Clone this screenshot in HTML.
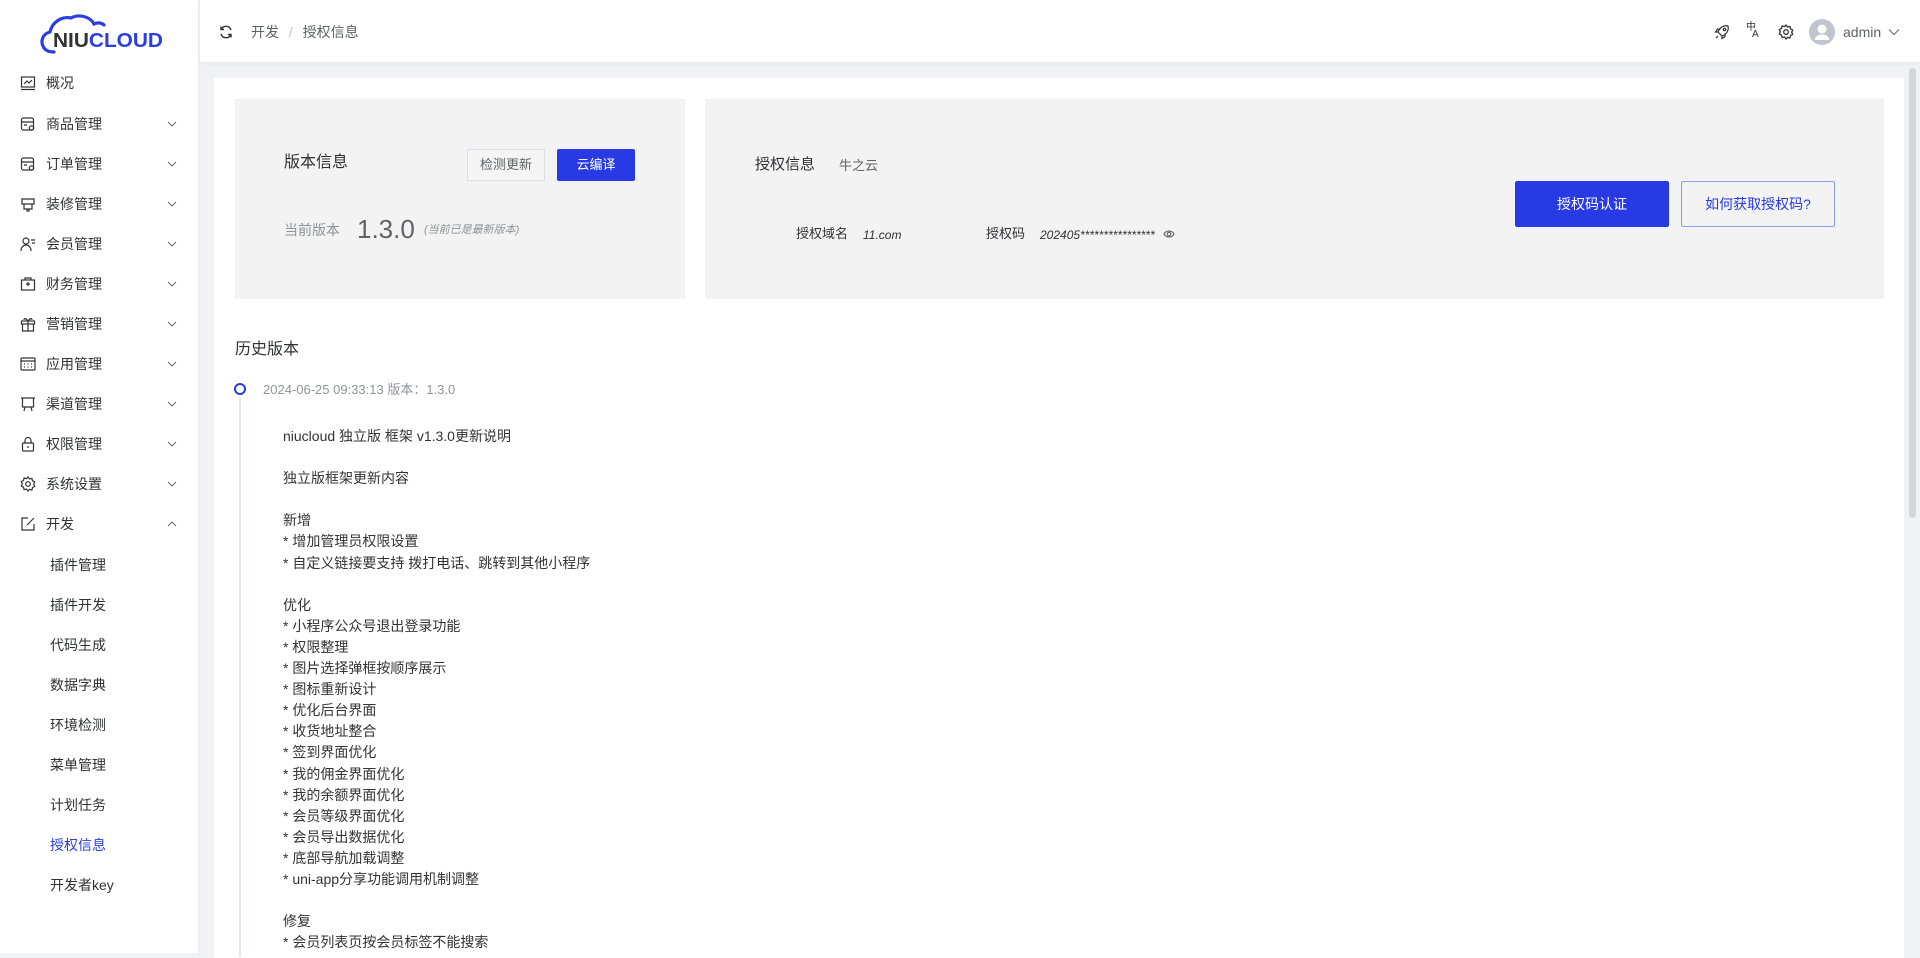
<!DOCTYPE html>
<html><head><meta charset="utf-8"><style>
*{margin:0;padding:0;box-sizing:border-box}
body{width:1920px;height:953px;overflow:hidden;background:#f0f2f5;font-family:"Liberation Sans","Noto Sans CJK SC",sans-serif;color:#303133;position:relative}
.abs{position:absolute}
#side{left:0;top:0;width:199px;height:953px;background:#fff;border-right:1px solid #e8ebf0}
.mi{position:absolute;left:0;width:199px;height:40px;line-height:40px;font-size:14px;color:#303133}
.mi .ic{position:absolute;left:20px;top:12px;width:16px;height:16px}
.mi .t{position:absolute;left:46px}
.mi .ch{position:absolute;left:167px;top:16px;width:10px;height:8px}
.sub{position:absolute;left:50px;height:40px;line-height:40px;font-size:14px;color:#303133}
#hdr{left:200px;top:0;width:1720px;height:62px;background:#fff;box-shadow:0 1px 4px rgba(0,21,41,.06)}
#card{left:214px;top:78px;width:1690px;height:880px;background:#fff}
.box{background:#f3f3f3}
.lines{left:283px;top:426px;font-size:14px;line-height:21.1px;color:#333}
</style></head><body>
<div id="side" class="abs">
<svg class="abs" style="left:38px;top:12px" width="130" height="42" viewBox="0 0 130 42">
<path d="M6 36 C2 30 4 22 12 20 C14 10 24 4 33 6 C40 2 52 4 56 12 C60 10 64 11 66 13" fill="none" stroke="#2a3ee3" stroke-width="3.2" stroke-linecap="round"/>
<path d="M6 36 C8 39 12 40 16 40" fill="none" stroke="#2a3ee3" stroke-width="3.2" stroke-linecap="round"/>
<text x="15" y="35" font-family="Liberation Sans" font-weight="700" font-size="20" textLength="110" lengthAdjust="spacingAndGlyphs"><tspan fill="#333">NIU</tspan><tspan fill="#2a3ee3">CLOUD</tspan></text>
</svg>
<div class="mi" style="top:63px"><svg class="ic" viewBox="0 0 16 16" fill="none" stroke="#333" stroke-width="1.2"><rect x="1.5" y="2" width="13" height="10"/><path d="M1 14.5h14M4 9l3-3 2 2 3-3"/></svg><span class="t">概况</span></div>
<div class="mi" style="top:104px"><svg class="ic" viewBox="0 0 16 16" fill="none" stroke="#333" stroke-width="1.2"><rect x="1.5" y="2" width="12" height="12" rx="2"/><path d="M1.5 6h12M4 9h3"/><circle cx="11.5" cy="12" r="2.2"/></svg><span class="t">商品管理</span><svg class="ch" viewBox="0 0 10 8" fill="none" stroke="#666" stroke-width="1"><path d="M1 2l4 4 4-4"/></svg></div>
<div class="mi" style="top:144px"><svg class="ic" viewBox="0 0 16 16" fill="none" stroke="#333" stroke-width="1.2"><rect x="1.5" y="2" width="12" height="12" rx="2"/><path d="M1.5 6h12M4 9h3"/><circle cx="11.5" cy="12" r="2.2"/></svg><span class="t">订单管理</span><svg class="ch" viewBox="0 0 10 8" fill="none" stroke="#666" stroke-width="1"><path d="M1 2l4 4 4-4"/></svg></div>
<div class="mi" style="top:184px"><svg class="ic" viewBox="0 0 16 16" fill="none" stroke="#333" stroke-width="1.2"><path d="M2 3h12v5H2zM4 8v5h8V8M7 13v2h2v-2"/></svg><span class="t">装修管理</span><svg class="ch" viewBox="0 0 10 8" fill="none" stroke="#666" stroke-width="1"><path d="M1 2l4 4 4-4"/></svg></div>
<div class="mi" style="top:224px"><svg class="ic" viewBox="0 0 16 16" fill="none" stroke="#333" stroke-width="1.2"><circle cx="6" cy="5" r="3"/><path d="M1 15c0-4 2.5-6 5-6s5 2 5 6M11 4h4M12 7h3"/></svg><span class="t">会员管理</span><svg class="ch" viewBox="0 0 10 8" fill="none" stroke="#666" stroke-width="1"><path d="M1 2l4 4 4-4"/></svg></div>
<div class="mi" style="top:264px"><svg class="ic" viewBox="0 0 16 16" fill="none" stroke="#333" stroke-width="1.2"><rect x="1.5" y="4" width="13" height="10"/><path d="M5 4V2h6v2M8 6v4M6 8h4"/></svg><span class="t">财务管理</span><svg class="ch" viewBox="0 0 10 8" fill="none" stroke="#666" stroke-width="1"><path d="M1 2l4 4 4-4"/></svg></div>
<div class="mi" style="top:304px"><svg class="ic" viewBox="0 0 16 16" fill="none" stroke="#333" stroke-width="1.2"><rect x="1.5" y="5" width="13" height="3"/><path d="M2.5 8v7h11V8M8 5v10M8 5C6 2 4 2 4 4M8 5c2-3 4-3 4-1"/></svg><span class="t">营销管理</span><svg class="ch" viewBox="0 0 10 8" fill="none" stroke="#666" stroke-width="1"><path d="M1 2l4 4 4-4"/></svg></div>
<div class="mi" style="top:344px"><svg class="ic" viewBox="0 0 16 16" fill="none" stroke="#333" stroke-width="1.2"><rect x="1" y="2" width="14" height="12" rx="1"/><path d="M1 5h14M4 8h1M7.5 8h1M11 8h1M4 11h1M7.5 11h1M11 11h1"/></svg><span class="t">应用管理</span><svg class="ch" viewBox="0 0 10 8" fill="none" stroke="#666" stroke-width="1"><path d="M1 2l4 4 4-4"/></svg></div>
<div class="mi" style="top:384px"><svg class="ic" viewBox="0 0 16 16" fill="none" stroke="#333" stroke-width="1.2"><path d="M1 2h14M2.5 2v9h11V2M5 11l-1 4M11 11l1 4"/></svg><span class="t">渠道管理</span><svg class="ch" viewBox="0 0 10 8" fill="none" stroke="#666" stroke-width="1"><path d="M1 2l4 4 4-4"/></svg></div>
<div class="mi" style="top:424px"><svg class="ic" viewBox="0 0 16 16" fill="none" stroke="#333" stroke-width="1.2"><rect x="2.5" y="7" width="11" height="8" rx="1"/><path d="M5 7V4.5a3 3 0 016 0V7M8 10v2"/></svg><span class="t">权限管理</span><svg class="ch" viewBox="0 0 10 8" fill="none" stroke="#666" stroke-width="1"><path d="M1 2l4 4 4-4"/></svg></div>
<div class="mi" style="top:464px"><svg class="ic" viewBox="0 0 16 16" fill="none" stroke="#333" stroke-width="1.2"><circle cx="8" cy="8" r="2.3"/><path d="M8 1l1.5 2 2.4-.6.6 2.4 2.2 1.2-1 2.2 1 2.2-2.2 1.2-.6 2.4-2.4-.6L8 15l-1.5-2-2.4.6-.6-2.4L1.3 10l1-2.2-1-2.2 2.2-1.2.6-2.4 2.4.6z"/></svg><span class="t">系统设置</span><svg class="ch" viewBox="0 0 10 8" fill="none" stroke="#666" stroke-width="1"><path d="M1 2l4 4 4-4"/></svg></div>
<div class="mi" style="top:504px"><svg class="ic" viewBox="0 0 16 16" fill="none" stroke="#333" stroke-width="1.2"><path d="M8 2H2v12h12V8M7 9l7-7"/></svg><span class="t">开发</span><svg class="ch" viewBox="0 0 10 8" fill="none" stroke="#666" stroke-width="1"><path d="M1 6l4-4 4 4"/></svg></div>
<div class="sub" style="top:545px">插件管理</div>
<div class="sub" style="top:585px">插件开发</div>
<div class="sub" style="top:625px">代码生成</div>
<div class="sub" style="top:665px">数据字典</div>
<div class="sub" style="top:705px">环境检测</div>
<div class="sub" style="top:745px">菜单管理</div>
<div class="sub" style="top:785px">计划任务</div>
<div class="sub" style="top:825px;color:#2a3ee3">授权信息</div>
<div class="sub" style="top:865px">开发者key</div>
</div>

<div id="hdr" class="abs">
<svg class="abs" style="left:19px;top:25px" width="14" height="14" viewBox="0 0 14 14" fill="none" stroke="#333" stroke-width="1.4"><path d="M12 5A5.2 5.2 0 002.2 4.5M2 1.5v3h3M2 9a5.2 5.2 0 009.8.5M12 12.5v-3H9"/></svg>
<div class="abs" style="left:51px;top:22px;font-size:14px;line-height:20px;color:#606266">开发 <span style="color:#c0c4cc;margin:0 6px">/</span> 授权信息</div>
<svg class="abs" style="left:1514px;top:24px" width="16" height="16" viewBox="0 0 16 16" fill="none" stroke="#333" stroke-width="1.2"><path d="M6 10l-2-2c2-5 6-7 10-6 1 4-1 8-6 10zM4 8H1.5l2-3h3M8 12v2.5l3-2v-3"/><circle cx="10.5" cy="5.5" r="1.2"/><path d="M4 12l-2 2"/></svg>
<div class="abs" style="left:1546px;top:23px;font-size:10px;line-height:10px;color:#333">中</div>
<div class="abs" style="left:1552px;top:30px;font-size:10px;line-height:10px;color:#333">A</div>
<svg class="abs" style="left:1578px;top:24px" width="16" height="16" viewBox="0 0 16 16" fill="none" stroke="#333" stroke-width="1.3"><circle cx="8" cy="8" r="2.3"/><path d="M8 1l1.5 2 2.4-.6.6 2.4 2.2 1.2-1 2.2 1 2.2-2.2 1.2-.6 2.4-2.4-.6L8 15l-1.5-2-2.4.6-.6-2.4L1.3 10l1-2.2-1-2.2 2.2-1.2.6-2.4 2.4.6z"/></svg>
<svg class="abs" style="left:1609px;top:19px" width="26" height="26" viewBox="0 0 26 26"><circle cx="13" cy="13" r="13" fill="#c0c4cc"/><circle cx="13" cy="10" r="4.5" fill="#fff"/><path d="M5.5 21c1-4 4-5.5 7.5-5.5s6.5 1.5 7.5 5.5z" fill="#fff"/></svg>
<div class="abs" style="left:1643px;top:22px;font-size:14px;line-height:20px;color:#606266">admin</div>
<svg class="abs" style="left:1688px;top:28px" width="12" height="8" viewBox="0 0 12 8" fill="none" stroke="#666" stroke-width="1"><path d="M1 1.5l5 5 5-5"/></svg>
</div>
<div class="abs" style="left:1909px;top:68px;width:7px;height:450px;background:#d4d6da;border-radius:4px"></div>

<div id="card" class="abs"></div>
<div class="abs box" style="left:235px;top:99px;width:450px;height:200px"></div>
<div class="abs box" style="left:705px;top:99px;width:1179px;height:200px"></div>

<div class="abs" style="left:284px;top:152px;font-size:16px;line-height:22px;color:#303133">版本信息</div>
<div class="abs" style="left:467px;top:149px;width:78px;height:32px;border:1px solid #dcdfe6;background:#f5f5f5;font-size:13px;line-height:30px;text-align:center;color:#606266">检测更新</div>
<div class="abs" style="left:557px;top:149px;width:78px;height:32px;background:#273ae3;font-size:13px;line-height:32px;text-align:center;color:#fff;border-radius:2px">云编译</div>
<div class="abs" style="left:284px;top:220px;font-size:14px;line-height:20px;color:#909399">当前版本</div>
<div class="abs" style="left:357px;top:214px;font-size:26px;line-height:30px;color:#606266">1.3.0</div>
<div class="abs" style="left:424px;top:222px;font-size:11px;line-height:16px;color:#909399;font-style:italic">(当前已是最新版本)</div>

<div class="abs" style="left:755px;top:154px;font-size:15px;line-height:22px;color:#303133">授权信息</div>
<div class="abs" style="left:839px;top:156px;font-size:13px;line-height:20px;color:#606266">牛之云</div>
<div class="abs" style="left:796px;top:224px;font-size:13px;line-height:20px;color:#303133">授权域名</div>
<div class="abs" style="left:863px;top:225px;font-size:12px;line-height:20px;color:#303133;font-style:italic">11.com</div>
<div class="abs" style="left:986px;top:224px;font-size:13px;line-height:20px;color:#303133">授权码</div>
<div class="abs" style="left:1040px;top:225px;font-size:12px;line-height:20px;color:#303133;font-style:italic">202405****************</div>
<svg class="abs" style="left:1163px;top:229px" width="12" height="10" viewBox="0 0 12 10" fill="none" stroke="#555" stroke-width="1"><path d="M1 5c2-4 8-4 10 0-2 4-8 4-10 0z"/><circle cx="6" cy="5" r="1.8"/></svg>
<div class="abs" style="left:1515px;top:181px;width:154px;height:46px;background:#273ae3;border-radius:2px;color:#fff;font-size:14px;line-height:46px;text-align:center">授权码认证</div>
<div class="abs" style="left:1681px;top:181px;width:154px;height:46px;border:1px solid #8e9bf0;border-radius:2px;color:#273ae3;font-size:14px;line-height:44px;text-align:center">如何获取授权码?</div>

<div class="abs" style="left:235px;top:339px;font-size:16px;line-height:22px;color:#303133">历史版本</div>
<div class="abs" style="left:234px;top:383px;width:12px;height:12px;border:2px solid #273ae3;border-radius:50%;background:#fff"></div>
<div class="abs" style="left:239px;top:397px;width:2px;height:560px;background:#e4e7ed"></div>
<div class="abs" style="left:263px;top:380px;font-size:13px;line-height:20px;color:#909399">2024-06-25 09:33:13 版本：1.3.0</div>
<div class="abs lines">niucloud 独立版 框架 v1.3.0更新说明<br><br>独立版框架更新内容<br><br>新增<br>* 增加管理员权限设置<br>* 自定义链接要支持 拨打电话、跳转到其他小程序<br><br>优化<br>* 小程序公众号退出登录功能<br>* 权限整理<br>* 图片选择弹框按顺序展示<br>* 图标重新设计<br>* 优化后台界面<br>* 收货地址整合<br>* 签到界面优化<br>* 我的佣金界面优化<br>* 我的余额界面优化<br>* 会员等级界面优化<br>* 会员导出数据优化<br>* 底部导航加载调整<br>* uni-app分享功能调用机制调整<br><br>修复<br>* 会员列表页按会员标签不能搜索</div>
</body></html>
